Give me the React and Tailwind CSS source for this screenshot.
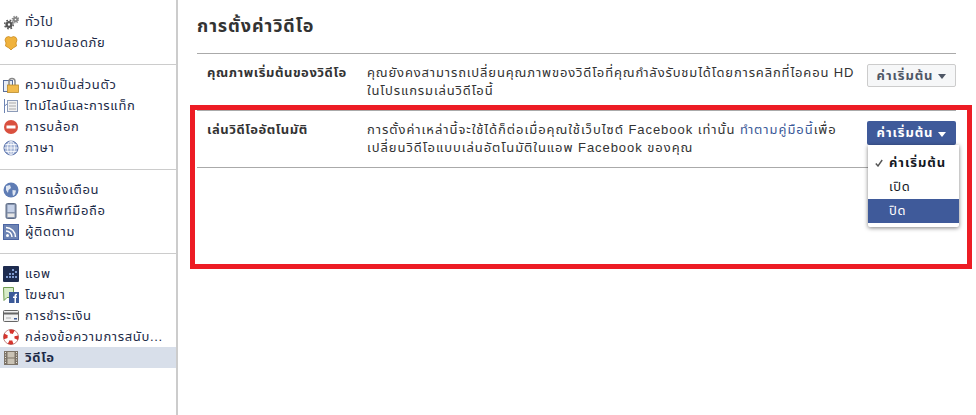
const Gears = () => (
  <svg width="16" height="16" viewBox="0 0 16 16">
    <circle cx="6" cy="10.500" r="2.400" fill="none" stroke="#555" strokeWidth="2.400" />
    <circle cx="6" cy="10.500" r="4.300" fill="none" stroke="#555" strokeWidth="1.400" strokeDasharray="1.700 1.700" />
    <circle cx="12.500" cy="5.500" r="1.800" fill="none" stroke="#888" strokeWidth="2" />
    <circle cx="12.500" cy="5.500" r="3.300" fill="none" stroke="#888" strokeWidth="1.200" strokeDasharray="1.300 1.300" />
  </svg>
);
const Shield = () => (
  <svg width="16" height="16" viewBox="0 0 16 16">
    <path d="M3 2.500 5.500 1.500 8 2.500 10.500 1.500 13 2.500 14 5 13 8 13.500 11 10 13 8 15 6 13 2.500 11 3 8 2 5Z" fill="#f0b23c" stroke="#c98a1e" strokeWidth=".8" />
  </svg>
);
const Lock = () => (
  <svg width="16" height="16" viewBox="0 0 16 16">
    <rect x=".5" y="3.500" width="9" height="11" fill="#e8edf5" stroke="#5a6f9c" />
    <path d="M6 8V4.500a3 3 0 0 1 6 0V8" fill="none" stroke="#888" strokeWidth="1.500" />
    <rect x="4.500" y="8" width="11" height="7.500" fill="#f2bb4c" stroke="#b98a2c" strokeWidth=".8" />
  </svg>
);
const Timeline = () => (
  <svg width="16" height="16" viewBox="0 0 16 16">
    <path d="M1.500 1v14M1.500 8 4 6" fill="none" stroke="#6d84b4" />
    <rect x="4.500" y="2.500" width="10" height="11" fill="#f2f2f2" stroke="#8c9bb8" />
    <path d="M6 5h7M6 8h7M6 11h7" stroke="#aaa" />
  </svg>
);
const NoEntry = () => (
  <svg width="16" height="16" viewBox="0 0 16 16">
    <circle cx="8" cy="8" r="7" fill="#d9503f" />
    <rect x="3.500" y="6.500" width="9" height="3" fill="#fff" />
  </svg>
);
const Grid = () => (
  <svg width="16" height="16" viewBox="0 0 16 16">
    <circle cx="8" cy="8" r="7" fill="#a9b8d8" stroke="#4c66a4" />
    <path d="M1 8h14M2.500 4.500h11M2.500 11.500h11M8 1v14" stroke="#fff" strokeWidth=".8" />
    <ellipse cx="8" cy="8" rx="3.500" ry="7" fill="none" stroke="#fff" strokeWidth=".8" />
  </svg>
);
const Earth = () => (
  <svg width="16" height="16" viewBox="0 0 16 16">
    <circle cx="8" cy="8" r="7.500" fill="#5f7db5" />
    <path d="M3 4 7 3 8 6 5.500 8 5 11 3 8ZM9.500 8 13 8.500 12 12.500 10 14 9.500 11Z" fill="#dfe6f2" />
  </svg>
);
const Phone = () => (
  <svg width="16" height="16" viewBox="0 0 16 16">
    <rect x="3" y=".5" width="10" height="15" rx="1.500" fill="#8593ad" stroke="#5d6b85" />
    <rect x="4.500" y="2" width="7" height="7" fill="#c5d1e8" />
    <rect x="4.500" y="10.500" width="7" height="3.500" fill="#e6e6e6" />
  </svg>
);
const Rss = () => (
  <svg width="16" height="16" viewBox="0 0 16 16">
    <rect x=".5" y=".5" width="15" height="15" fill="#6d84b4" stroke="#4c66a4" />
    <circle cx="4.500" cy="11.500" r="1.500" fill="#fff" />
    <path d="M3 7a6 6 0 0 1 6 6M3 3.500A9.500 9.500 0 0 1 12.500 13" fill="none" stroke="#fff" strokeWidth="1.500" />
  </svg>
);
const Apps = () => (
  <svg width="16" height="16" viewBox="0 0 16 16">
    <rect width="16" height="16" rx="1" fill="#1d2b4f" />
    <path d="M9 3h2v2H9zM12 5h2v2h-2zM6 7h2v2H6zM9 7h2v2H9zM3 10h2v2H3zM6 10h2v2H6zM9 10h2v2H9zM12 10h2v2h-2z" fill="#7f9bd0" />
  </svg>
);
const Ads = () => (
  <svg width="16" height="16" viewBox="0 0 16 16">
    <path d="M.5.500h10v10H4l-3 3Z" fill="#d8ecc8" stroke="#6f9a50" />
    <rect x="6" y="5" width="10" height="11" fill="#3b5998" />
    <path d="M11.500 16v-5H10V9.500h1.500V8.500c0-1.200.8-1.800 2.500-1.700v1.400c-.8 0-1 .1-1 .6v.7h1L13.800 11H13v5Z" fill="#fff" />
  </svg>
);
const Card = () => (
  <svg width="16" height="16" viewBox="0 0 16 16">
    <rect x=".5" y="2.500" width="15" height="11" rx="1" fill="#f1f1f1" stroke="#666" />
    <rect x="1" y="4.500" width="14" height="2" fill="#666" />
    <path d="M3 10h5" stroke="#aaa" />
    <rect x="11" y="10" width="3" height="1.500" fill="#3b5998" />
  </svg>
);
const Buoy = () => (
  <svg width="16" height="16" viewBox="0 0 16 16">
    <circle cx="8" cy="8" r="5.500" fill="none" stroke="#fff" strokeWidth="4" />
    <circle cx="8" cy="8" r="5.500" fill="none" stroke="#d8332c" strokeWidth="4" strokeDasharray="4.300 4.340" strokeDashoffset="2.100" />
    <circle cx="8" cy="8" r="7.500" fill="none" stroke="#9a3a36" strokeWidth=".6" />
  </svg>
);
const Film = () => (
  <svg width="16" height="16" viewBox="0 0 16 16">
    <rect x="1" y="1" width="14" height="14" fill="#7d7468" />
    <path d="M2 2.500h1M2 5h1M2 7.500h1M2 10h1M2 12.500h1M13 2.500h1M13 5h1M13 7.500h1M13 10h1M13 12.500h1" stroke="#e8e4dc" strokeWidth="1.200" />
    <rect x="4.500" y="2" width="7" height="5.500" fill="#c9c2b4" />
    <rect x="4.500" y="8.500" width="7" height="5.500" fill="#c9c2b4" />
  </svg>
);

const groups = [
  [
    { label: "ทั่วไป", icon: <Gears /> },
    { label: "ความปลอดภัย", icon: <Shield /> },
  ],
  [
    { label: "ความเป็นส่วนตัว", icon: <Lock /> },
    { label: "ไทม์ไลน์และการแท็ก", icon: <Timeline /> },
    { label: "การบล้อก", icon: <NoEntry /> },
    { label: "ภาษา", icon: <Grid /> },
  ],
  [
    { label: "การแจ้งเตือน", icon: <Earth /> },
    { label: "โทรศัพท์มือถือ", icon: <Phone /> },
    { label: "ผู้ติดตาม", icon: <Rss /> },
  ],
  [
    { label: "แอพ", icon: <Apps /> },
    { label: "โฆษณา", icon: <Ads /> },
    { label: "การชำระเงิน", icon: <Card /> },
    { label: "กล่องข้อความการสนับ...", icon: <Buoy /> },
    { label: "วิดีโอ", icon: <Film />, active: true },
  ],
];

function Caret() {
  return <span className="ml-[5px] mt-[2px] border-x-[4px] border-t-[5px] border-x-transparent border-t-current" />;
}

export default function App() {
  return (
    <div className="relative flex h-[415px] w-[976px] overflow-hidden bg-white font-['Liberation_Sans','Noto_Sans_Thai','Noto_Sans',sans-serif] text-[13px] tracking-[0.55px] text-[#333]">
      <aside className="w-[178px] shrink-0 border-r-2 border-[#ccc] tracking-[0.65px]">
        {groups.map((items, i) => (
          <div key={i} className={`pb-[11px] ${i === 0 ? "pt-[11px]" : "pt-[9px]"} ${i < 3 ? "border-b border-[#ccc]" : ""}`}>
            {items.map((it) => (
              <div key={it.label} className={`flex h-[21px] items-center gap-[6px] pl-[3px] text-[#1c2a47] ${it.active ? "bg-[#d8dfea] font-bold" : ""}`}>
                {it.icon}
                <span className="whitespace-nowrap">{it.label}</span>
              </div>
            ))}
          </div>
        ))}
      </aside>

      <main className="ml-[19px] w-[759px]">
        <h1 className="flex h-[53px] items-center pb-[1px] text-[18px] font-bold tracking-[0.9px]">การตั้งค่าวิดีโอ</h1>

        <div className="flex h-[58px] border-y border-[#aaa] pl-[10px] pt-[10px] leading-[18px]">
          <div className="w-[160px] whitespace-nowrap font-bold">คุณภาพเริ่มต้นของวิดีโอ</div>
          <p className="flex-1 whitespace-nowrap tracking-[0.85px]">คุณยังคงสามารถเปลี่ยนคุณภาพของวิดีโอที่คุณกำลังรับชมได้โดยการคลิกที่ไอคอน HD<br />ในโปรแกรมเล่นวิดีโอนี้</p>
          <button className="flex h-[23px] w-[89px] items-center justify-center rounded-[2px] border border-[#ccc] bg-[#f6f7f8] font-bold tracking-[0.9px] text-[#4e5665]">
            ค่าเริ่มต้น<Caret />
          </button>
        </div>

        <div className="flex h-[57px] border-b border-[#aaa] pl-[10px] pt-[10px] leading-[18px]">
          <div className="w-[160px] whitespace-nowrap font-bold">เล่นวิดีโออัตโนมัติ</div>
          <p className="flex-1 whitespace-nowrap tracking-[0.95px]">การตั้งค่าเหล่านี้จะใช้ได้ก็ต่อเมื่อคุณใช้เว็บไซต์ Facebook เท่านั้น <span className="text-[#3b5998]">ทำตามคู่มือนี้</span>เพื่อ<br />เปลี่ยนวิดีโอแบบเล่นอัตโนมัติในแอพ Facebook ของคุณ</p>
          <div className="relative">
            <button className="flex h-[24px] w-[89px] items-center justify-center rounded-[2px] bg-[#3f5a9a] font-bold tracking-[0.9px] text-white">
              ค่าเริ่มต้น<Caret />
            </button>
            <div className="absolute left-[1px] top-[24px] z-10 h-[82px] w-[91px] rounded-b-[2px] bg-white pt-[6px] text-[#141823] shadow-[0_1px_4px_rgba(0,0,0,0.5)]">
              <div className="flex h-[24px] items-center whitespace-nowrap pl-[7px] font-bold tracking-[0.95px]">
                <svg width="8" height="8" viewBox="0 0 8 8" className="mr-[6px]"><path d="M.8 4.500 3 7 7.200 1" fill="none" stroke="#555" strokeWidth="1.400" /></svg>
                ค่าเริ่มต้น
              </div>
              <div className="flex h-[24px] items-center pl-[21px]">เปิด</div>
              <div className="flex h-[24px] items-center bg-[#3f5a9a] pl-[21px] text-white">ปิด</div>
            </div>
          </div>
        </div>
      </main>

      {/* annotation */}
      <div className="pointer-events-none absolute left-[190px] top-[105px] h-[164px] w-[782px] border-[5px] border-[#ed1c24]" />
    </div>
  );
}
